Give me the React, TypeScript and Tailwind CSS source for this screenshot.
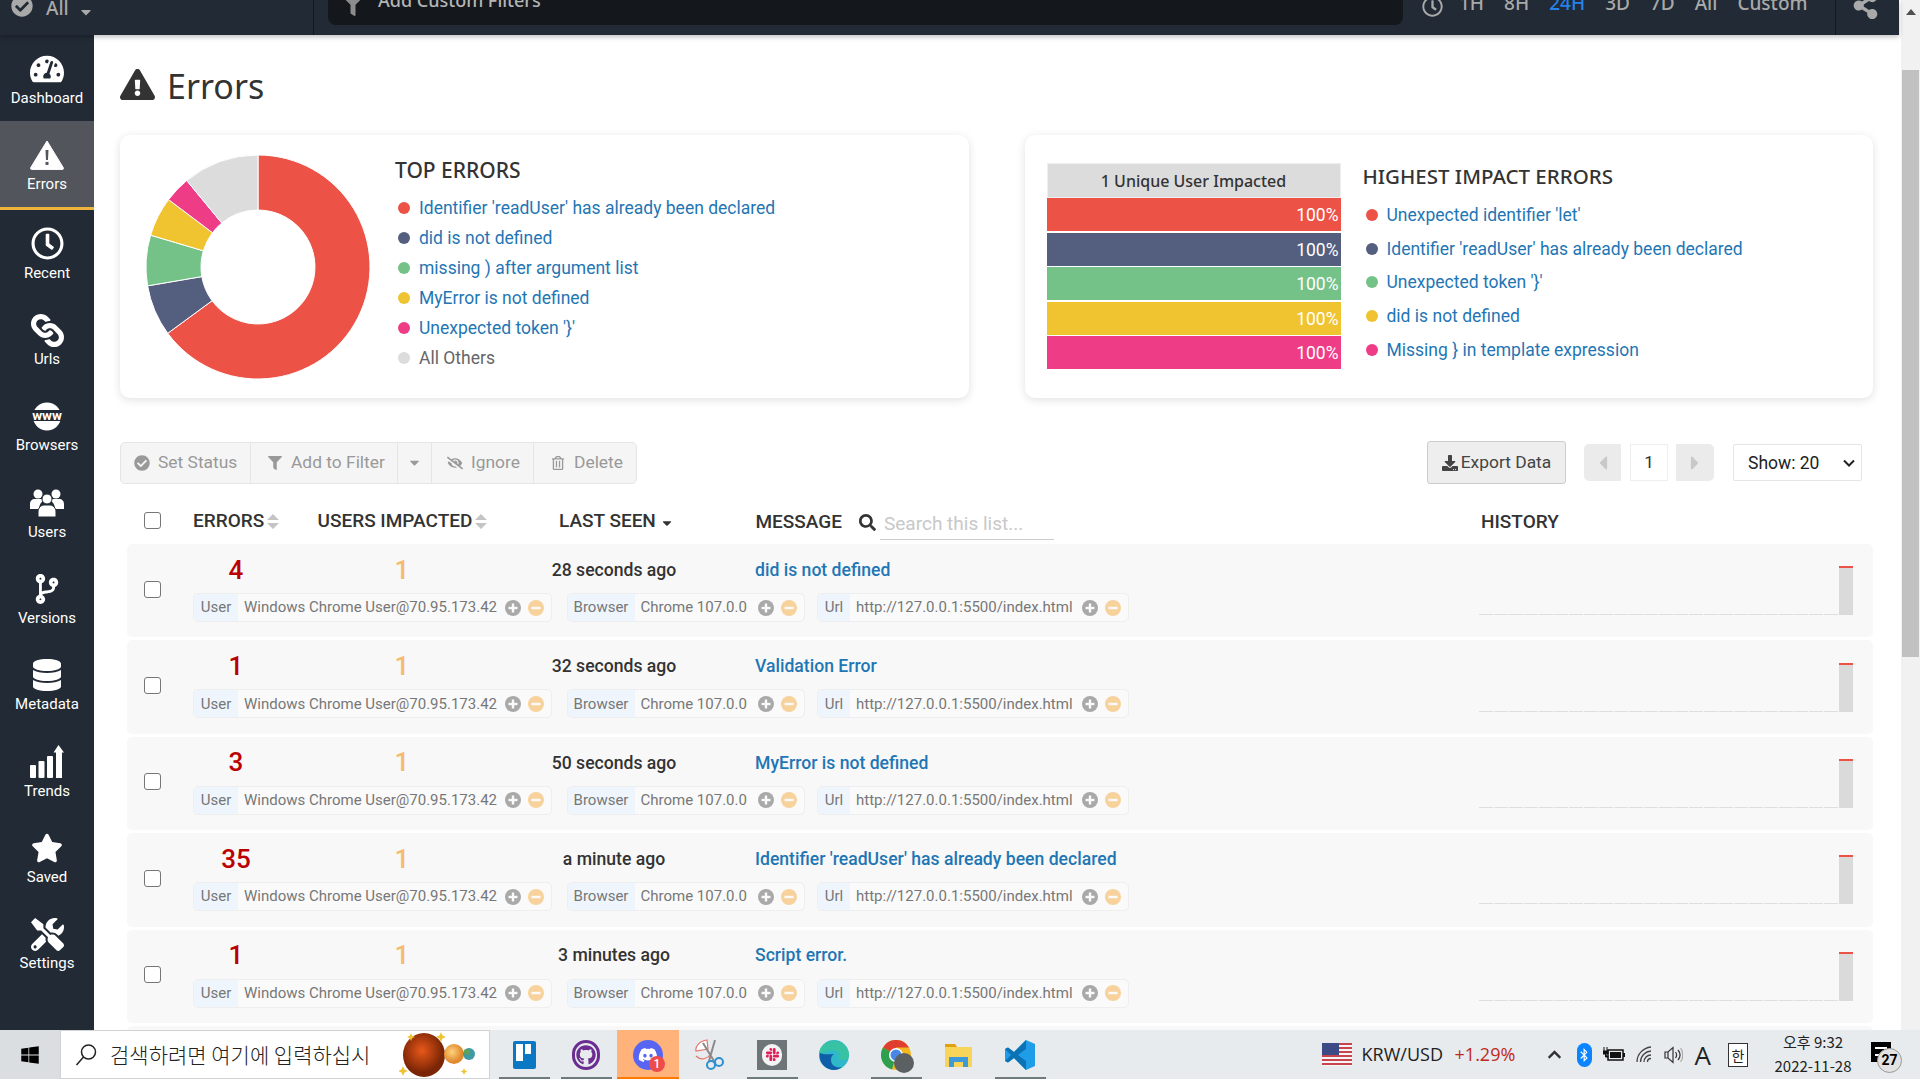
import type { ReactNode } from 'react';
import { FaCheckCircle, FaCodeBranch, FaDatabase, FaDownload, FaEyeSlash, FaFilter, FaGithub, FaLink, FaRegClock, FaSearch, FaShareAlt, FaSlack, FaStar, FaTachometerAlt, FaTools, FaDiscord, FaExclamationTriangle, FaRegTrashAlt, FaCaretDown, FaCaretLeft, FaCaretRight, FaBluetoothB, FaWindows, FaChevronUp } from 'react-icons/fa';

const red = '#ec5246';
const slate = '#545e7f';
const green = '#74c287';
const yellow = '#f0c330';
const pink = '#ee3d86';
const gray = '#dcdcdc';

const slices = [
  { from: 0, to: 233.7, color: red },
  { from: 233.7, to: 260.3, color: slate },
  { from: 260.3, to: 286.5, color: green },
  { from: 286.5, to: 307, color: yellow },
  { from: 307, to: 320.5, color: pink },
  { from: 320.5, to: 360, color: gray },
];

const topErrors = [
  { label: "Identifier 'readUser' has already been declared", color: red },
  { label: 'did is not defined', color: slate },
  { label: 'missing ) after argument list', color: green },
  { label: 'MyError is not defined', color: yellow },
  { label: "Unexpected token '}'", color: pink },
];

const impactErrors = [
  { label: "Unexpected identifier 'let'", color: red },
  { label: "Identifier 'readUser' has already been declared", color: slate },
  { label: "Unexpected token '}'", color: green },
  { label: 'did is not defined', color: yellow },
  { label: 'Missing } in template expression', color: pink },
];

const rows = [
  { count: '4', seen: '28 seconds ago', message: 'did is not defined' },
  { count: '1', seen: '32 seconds ago', message: 'Validation Error' },
  { count: '3', seen: '50 seconds ago', message: 'MyError is not defined' },
  { count: '35', seen: 'a minute ago', message: "Identifier 'readUser' has already been declared" },
  { count: '1', seen: '3 minutes ago', message: 'Script error.' },
];

function polar(r: number, deg: number) {
  const a = (deg * Math.PI) / 180;
  return `${112 + r * Math.sin(a)} ${112 - r * Math.cos(a)}`;
}

function Donut() {
  return (
    <svg width="224" height="224" viewBox="0 0 224 224" className="shrink-0">
      {slices.map((s) => {
        const big = s.to - s.from > 180 ? 1 : 0;
        return (
          <path
            key={s.color}
            fill={s.color}
            stroke="#fff"
            strokeWidth="1"
            d={`M${polar(112, s.from)} A112 112 0 ${big} 1 ${polar(112, s.to)} L${polar(57, s.to)} A57 57 0 ${big} 0 ${polar(57, s.from)} Z`}
          />
        );
      })}
    </svg>
  );
}

function Globe() {
  return (
    <svg width="34" height="29" viewBox="0 0 34 29">
      <circle cx="17" cy="14.5" r="14" fill="#fff" />
      <rect x="0" y="8" width="34" height="11" fill="#222a35" />
      <text x="17" y="18" textAnchor="middle" fill="#fff" fontSize="13.5" fontWeight="700" fontFamily="Roboto, sans-serif">www</text>
    </svg>
  );
}

function TrendsIcon() {
  return (
    <svg width="34" height="34" viewBox="0 0 34 34" fill="#fff">
      <rect x="0" y="20" width="6" height="13" rx="1" />
      <rect x="8.500" y="16" width="6" height="17" rx="1" />
      <rect x="17" y="11" width="6" height="22" rx="1" />
      <path d="M26 33V7.500h-2.500L28.500 0l5.500 7.500H32V33z" />
    </svg>
  );
}

function UsersIcon() {
  return (
    <svg width="34" height="28" viewBox="0 0 34 28" fill="#fff">
      <circle cx="8" cy="5" r="4.500" />
      <circle cx="26" cy="5" r="4.500" />
      <path d="M0 20v-5c0-3 2-5 5-5h6c1 0 2 .5 3 1-3 2-5 5-5 9z" />
      <path d="M34 20v-5c0-3-2-5-5-5h-6c-1 0-2 .5-3 1 3 2 5 5 5 9z" />
      <circle cx="17" cy="10" r="5" fill="#fff" stroke="#222a35" strokeWidth="1" />
      <path d="M8 28v-5c0-4 3-7 6-7h6c3 0 6 3 6 7v5z" stroke="#222a35" strokeWidth="1" />
    </svg>
  );
}

function WarnIcon({ size, color }: { size: number; color: string }) {
  return (
    <svg width={size} height={size * 0.88} viewBox="0 0 34 30">
      <path d="M17 1 33.5 28a1 1 0 0 1-1 1.5H1.500a1 1 0 0 1-1-1.500z" fill={color} stroke={color} strokeWidth="1" strokeLinejoin="round" />
      <path d="M15.500 10h3l-.5 10h-2z" fill={color === '#fff' ? '#52555c' : '#fff'} />
      <rect x="15.500" y="22" width="3" height="3" fill={color === '#fff' ? '#52555c' : '#fff'} />
    </svg>
  );
}

const navItems: { label: string; icon: ReactNode; active?: boolean }[] = [
  { label: 'Dashboard', icon: <FaTachometerAlt size={34} /> },
  { label: 'Errors', icon: <WarnIcon size={34} color="#fff" />, active: true },
  { label: 'Recent', icon: <FaRegClock size={33} /> },
  { label: 'Urls', icon: <FaLink size={33} className="rotate-90" /> },
  { label: 'Browsers', icon: <Globe /> },
  { label: 'Users', icon: <UsersIcon /> },
  { label: 'Versions', icon: <FaCodeBranch size={30} /> },
  { label: 'Metadata', icon: <FaDatabase size={32} /> },
  { label: 'Trends', icon: <TrendsIcon /> },
  { label: 'Saved', icon: <FaStar size={32} /> },
  { label: 'Settings', icon: <FaTools size={33} /> },
];

function Sidebar() {
  return (
    <aside className="w-[94px] shrink-0 bg-[#222a35] text-white flex flex-col">
      {navItems.map((item) => (
        <div
          key={item.label}
          className={
            item.active
              ? 'h-[88.500px] shrink-0 flex flex-col items-center bg-[#52555c] border-b-[3px] border-[#f0b43c] pt-[16px]'
              : 'h-[86.300px] shrink-0 flex flex-col items-center pt-[16px]'
          }
        >
          <div className="h-[36px] flex items-center justify-center">{item.icon}</div>
          <span className="text-[15px] leading-[18px] mt-[2px]">{item.label}</span>
        </div>
      ))}
    </aside>
  );
}

function TopBar() {
  const times = ['1H', '8H', '24H', '3D', '7D', 'All', 'Custom'];
  return (
    <header className="h-[35px] shrink-0 bg-[#222a35] flex text-[#a9a9a9] overflow-hidden relative z-10 shadow-[0_2px_5px_rgba(0,0,0,0.25)] font-['Noto_Sans',sans-serif] font-medium text-[19px] leading-[24px]">
      <div className="w-[314px] shrink-0 border-r border-[#14181c] flex items-start pl-[11px] -mt-[8px]">
        <FaCheckCircle size={22} className="mt-[3px]" />
        <span className="ml-[13px] mt-[4px]">All</span>
        <FaCaretDown size={16} className="ml-[9px] mt-[12px]" />
      </div>
      <div className="ml-[14px] w-[1075px] h-[25px] bg-[#14181c] rounded-b-[8px] flex items-start pl-[15px]">
        <FaFilter size={20} className="-mt-[4px] text-[#8c8c8c]" />
        <span className="ml-[15px] -mt-[12px] text-[#b5b5b5] text-[18px]">Add Custom Filters</span>
      </div>
      <div className="flex items-start ml-[19px] -mt-[9px]">
        <FaRegClock size={21} className="mt-[5px] mr-[16px]" />
        <div className="flex gap-[20px]">
          {times.map((t) => (
            <span key={t} className={t === '24H' ? 'text-[#2383e8]' : ''}>{t}</span>
          ))}
        </div>
      </div>
      <div className="ml-auto w-[64px] border-l border-[#14181c] pl-[16px]">
        <FaShareAlt size={27} className="-mt-[8px]" />
      </div>
    </header>
  );
}

function SortIcon({ className }: { className?: string }) {
  return (
    <svg width="12" height="15" viewBox="0 0 12 15" fill="#c4c4c4" className={className}>
      <path d="M6 0l6 6H0zM6 15l6-6H0z" />
    </svg>
  );
}

function RoundAction({ kind }: { kind: 'plus' | 'minus' }) {
  return (
    <svg width="16" height="16" viewBox="0 0 16 16">
      <circle cx="8" cy="8" r="8" fill={kind === 'plus' ? '#a9a9a9' : '#f8d29c'} />
      <rect x="3.500" y="6.800" width="9" height="2.400" fill="#fafafa" />
      {kind === 'plus' && <rect x="6.800" y="3.500" width="2.400" height="9" fill="#fafafa" />}
    </svg>
  );
}

function Chip({ label, value, width, labelWidth }: { label: string; value: string; width: string; labelWidth: string }) {
  return (
    <div className={`${width} h-[29px] flex items-center bg-[#fafafa] border border-[#eeeeee] rounded-[5px] overflow-hidden text-[15px] text-[#777]`}>
      <span className={`${labelWidth} h-full shrink-0 bg-[#eef5fc] flex items-center justify-center`}>{label}</span>
      <span className="ml-[6px] whitespace-nowrap">{value}</span>
      <div className="ml-auto mr-[7px] flex gap-[7px]">
        <RoundAction kind="plus" />
        <RoundAction kind="minus" />
      </div>
    </div>
  );
}

function History() {
  return (
    <div className="ml-auto mr-[20px] h-[49px] flex items-end shrink-0">
      {Array.from({ length: 24 }).map((_, i) => (
        <div key={i} className="w-[14px] mr-[1px] h-[1px] bg-[#dedede]" />
      ))}
      <div className="w-[14px] h-[49px] bg-[#dadada] border-t-2 border-[#ec5246]" />
    </div>
  );
}

function ErrorRow({ count, seen, message }: { count: string; seen: string; message: string }) {
  return (
    <div className="h-[93.400px] mb-[3px] ml-[6.500px] bg-[#f8f8f8] rounded-[5px] flex items-center pl-[17.500px]">
      <input type="checkbox" className="w-[17px] h-[17px] -mt-[3px] shrink-0 appearance-none border border-[#767676] rounded-[3px] bg-white" />
      <div className="ml-[32px] flex flex-col self-start">
        <div className="h-[49px] flex items-center pt-[3px]">
          <span className="w-[86px] text-center text-[26px] font-medium text-[#bb0000]">{count}</span>
          <span className="w-[244px] pl-[2px] text-center text-[26px] font-medium text-[#f5bb6e]">1</span>
          <span className="w-[182px] text-center text-[17.600px] font-medium text-[#333]">{seen}</span>
          <span className="pl-[50px] text-[17.600px] font-medium text-[#1f76b4]">{message}</span>
        </div>
        <div className="flex">
          <Chip label="User" value="Windows Chrome User@70.95.173.42" width="w-[359px]" labelWidth="w-[44px]" />
          <div className="w-[14.500px]" />
          <Chip label="Browser" value="Chrome 107.0.0" width="w-[238px]" labelWidth="w-[67px]" />
          <div className="w-[12.500px]" />
          <Chip label="Url" value="http://127.0.0.1:5500/index.html" width="w-[311.500px]" labelWidth="w-[32px]" />
        </div>
      </div>
      <History />
    </div>
  );
}

function Legend({ items, pitch }: { items: { label: string; color: string }[]; pitch: string }) {
  return (
    <ul>
      {items.map((item) => (
        <li key={item.label} className={`${pitch} flex items-center text-[17.500px] text-[#1f76b4]`}>
          <span className="w-[12px] h-[12px] rounded-full shrink-0 mr-[9px] ml-[3px]" style={{ backgroundColor: item.color }} />
          {item.label}
        </li>
      ))}
    </ul>
  );
}

function Cards() {
  const bars = [red, slate, green, yellow, pink];
  return (
    <div className="grid grid-cols-2 gap-[56px]">
      <section className="h-[263px] bg-white rounded-[10px] shadow-[0_2px_10px_rgba(0,0,0,0.12)] flex pl-[26px] pt-[20px]">
        <Donut />
        <div className="ml-[25px]">
          <h2 className="text-[21px] leading-[30px] font-medium text-[#333] font-['Noto_Sans',sans-serif]">TOP ERRORS</h2>
          <div className="mt-[8px]">
            <Legend items={topErrors} pitch="h-[30px]" />
            <div className="h-[30px] flex items-center text-[17.500px] text-[#666]">
              <span className="w-[12px] h-[12px] rounded-full mr-[9px] ml-[3px] bg-[#dcdcdc]" />
              All Others
            </div>
          </div>
        </div>
      </section>
      <section className="h-[263px] bg-white rounded-[10px] shadow-[0_2px_10px_rgba(0,0,0,0.12)] flex pl-[22px] pt-[28px]">
        <div className="w-[294px] shrink-0">
          <div className="h-[35px] bg-[#dcdcdc] border border-[#eeeeee] flex items-center justify-center text-[16px] font-medium text-[#333] font-['Noto_Sans',sans-serif]">
            1 Unique User Impacted
          </div>
          {bars.map((c) => (
            <div key={c} className="h-[33px] mb-[1.500px] flex items-center justify-end pr-[2px] pt-[2px] text-white text-[17.500px]" style={{ backgroundColor: c }}>
              100%
            </div>
          ))}
        </div>
        <div className="ml-[22px] -mt-[2px]">
          <h2 className="text-[20.500px] leading-[30px] font-medium text-[#333] font-['Noto_Sans',sans-serif]">HIGHEST IMPACT ERRORS</h2>
          <div className="mt-[7px]">
            <Legend items={impactErrors} pitch="h-[33.750px]" />
          </div>
        </div>
      </section>
    </div>
  );
}

function Toolbar() {
  const seg = 'h-full flex items-center border-r border-[#e5e5e5]';
  return (
    <div className="mt-[43px] h-[43px] flex items-center">
      <div className="w-[517px] h-[42px] bg-[#f5f5f5] border border-[#e5e5e5] rounded-[5px] flex text-[17.400px] text-[#999]">
        <div className={`${seg} w-[130px] pl-[13px] gap-[8px]`}><FaCheckCircle size={16} />Set Status</div>
        <div className={`${seg} w-[147px] pl-[17px] gap-[9px]`}><FaFilter size={14} />Add to Filter</div>
        <div className={`${seg} w-[34px] justify-center`}><FaCaretDown size={15} /></div>
        <div className={`${seg} w-[102px] pl-[15px] gap-[8px]`}><FaEyeSlash size={16} />Ignore</div>
        <div className="h-full flex items-center pl-[17px] gap-[9px]"><FaRegTrashAlt size={14} />Delete</div>
      </div>
      <div className="ml-auto flex items-center mr-[11px]">
        <div className="w-[139px] h-[43px] bg-[#eeeeee] border border-[#cccccc] rounded-[3px] flex items-center justify-center gap-[3px] text-[17.400px] text-[#444]">
          <FaDownload size={16} />Export Data
        </div>
        <div className="ml-[18px] w-[37px] h-[37px] bg-[#ebebeb] rounded-l-[5px] flex items-center justify-center text-[#c8c8c8]"><FaCaretLeft size={22} /></div>
        <div className="ml-[9px] w-[38px] h-[37px] bg-white border border-[#eeeeee] flex items-center justify-center text-[17px] text-[#333]">1</div>
        <div className="ml-[8px] w-[38px] h-[37px] bg-[#ebebeb] rounded-r-[5px] flex items-center justify-center text-[#c8c8c8]"><FaCaretRight size={22} /></div>
        <div className="ml-[19px] w-[129px] h-[37px] bg-white border border-[#e5e5e5] rounded-[2px] flex items-center pl-[14px] pt-[1px] text-[17.500px] text-[#222]">
          Show: 20
          <svg width="12" height="8" viewBox="0 0 12 8" className="ml-auto mr-[6px]" fill="none" stroke="#222" strokeWidth="2"><path d="M1 1.500l5 5 5-5" /></svg>
        </div>
      </div>
    </div>
  );
}

function ListHeader() {
  const h = 'text-[19px] font-medium text-[#333]';
  return (
    <div className="h-[60px] flex items-center relative">
      <input type="checkbox" className="ml-[24px] w-[17px] h-[17px] mt-[13px] appearance-none border border-[#767676] rounded-[3px] bg-white" />
      <div className="ml-[32px] w-[124.500px] flex items-center gap-[3px] mt-[14px]"><span className={h}>ERRORS</span><SortIcon /></div>
      <div className="w-[241.500px] flex items-center gap-[3px] mt-[14px]"><span className={h}>USERS IMPACTED</span><SortIcon /></div>
      <div className="w-[196.500px] flex items-center gap-[4px] mt-[14px]"><span className={h}>LAST SEEN</span><FaCaretDown size={14} className="text-[#333] mt-[4px]" /></div>
      <span className={`${h} mt-[17px]`}>MESSAGE</span>
      <FaSearch size={17} className="ml-[17px] mt-[17px] text-[#333]" />
      <div className="ml-[4px] w-[174px] h-[30px] border-b border-[#cccccc] pl-[4px] text-[19px] text-[#c8c8c8] flex items-center mt-[21px]">Search this list...</div>
      <span className={`${h} absolute left-[1361px] top-[24px]`}>HISTORY</span>
    </div>
  );
}

function Scrollbar() {
  return (
    <div className="w-[21px] shrink-0 bg-white flex">
      <div className="ml-[2px] w-[19px] bg-[#f1f1f1] flex flex-col items-center relative">
        <svg width="10" height="6" viewBox="0 0 10 6" className="mt-[9px]" fill="#505050"><path d="M5 0l5 6H0z" /></svg>
        <div className="mt-[55px] w-[17px] h-[587px] bg-[#c1c1c1]" />
      </div>
    </div>
  );
}

function Planets() {
  return (
    <svg width="82" height="50" viewBox="0 0 82 50" className="ml-auto mr-[8px] shrink-0">
      <defs>
        <radialGradient id="mars" cx="45%" cy="40%"><stop offset="0%" stopColor="#e8581a" /><stop offset="100%" stopColor="#7a2505" /></radialGradient>
        <radialGradient id="sun" cx="40%" cy="40%"><stop offset="0%" stopColor="#ffd27a" /><stop offset="100%" stopColor="#e08a30" /></radialGradient>
      </defs>
      <ellipse cx="25" cy="25" rx="21" ry="22" fill="url(#mars)" />
      <circle cx="55" cy="24" r="10" fill="url(#sun)" />
      <circle cx="70" cy="24" r="6" fill="#3f9aa5" />
      <circle cx="68" cy="22" r="3" fill="#5da356" />
      <path d="M12 3l1.200 2.800L16 7l-2.800 1.200L12 11l-1.200-2.800L8 7l2.800-1.200zM42 2l1.500 3.500L47 7l-3.500 1.500L42 12l-1.500-3.500L37 7l3.500-1.500zM4 36l1.500 3.500L9 41l-3.500 1.500L4 46l-1.500-3.500L-1 41l3.500-1.500zM65 38l1 2.500L68.500 41.500 66 42.500 65 45l-1-2.500-2.500-1 2.500-1z" fill="#f0c330" />
    </svg>
  );
}

function AppCell({ children, mark, hot }: { children: ReactNode; mark?: boolean; hot?: boolean }) {
  return (
    <div className={hot ? 'w-[62px] h-full flex items-center justify-center relative bg-[#ffb27a]' : 'w-[62px] h-full flex items-center justify-center relative'}>
      {children}
      {mark && <div className="absolute bottom-0 left-[6px] right-[5px] h-[2px] bg-[#6f7a80]" />}
      {hot && <div className="absolute bottom-0 left-0 right-0 h-[2px] bg-[#ff7a00]" />}
    </div>
  );
}

function Taskbar() {
  return (
    <footer className="h-[49px] shrink-0 bg-[#e7ebed] flex items-center text-[#222]">
      <div className="w-[60px] h-full bg-[#dadee1] flex items-center justify-center"><FaWindows size={20} className="text-black" /></div>
      <div className="w-[430px] h-full bg-white border border-[#cfd3d6] flex items-center pl-[14px] overflow-hidden">
        <svg width="22" height="24" viewBox="0 0 22 24" fill="none" stroke="#222" strokeWidth="1.500"><circle cx="13.500" cy="9" r="7" /><path d="M8.500 14 1.500 22" /></svg>
        <span className="ml-[13px] text-[21px] whitespace-nowrap font-['Noto_Sans_CJK_KR',sans-serif] font-light">검색하려면 여기에 입력하십시</span>
        <Planets />
      </div>
      <div className="ml-[3px] flex h-full">
        <AppCell mark>
          <div className="w-[23px] h-[28px] bg-[#0a78c2] rounded-[2px] flex gap-[2px] p-[3.500px]">
            <div className="w-[7px] h-[17px] bg-white" /><div className="w-[6px] h-[10px] bg-white" />
          </div>
        </AppCell>
        <AppCell mark>
          <div className="w-[28px] h-[30px] rounded-full border-[3px] border-[#6b2d91] flex items-center justify-center"><FaGithub size={20} className="text-[#6b2d91]" /></div>
        </AppCell>
        <AppCell hot>
          <div className="w-[30px] h-[30px] rounded-full bg-[#5865f2] flex items-center justify-center relative">
            <FaDiscord size={20} className="text-white" />
            <span className="absolute -right-[2px] -bottom-[2px] w-[16px] h-[16px] rounded-full bg-[#ee4b4b] text-white text-[12px] leading-[16px] text-center font-medium">1</span>
          </div>
        </AppCell>
        <AppCell>
          <svg width="30" height="32" viewBox="0 0 30 32" fill="none">
            <path d="M12 1 C4 2 0 8 1 12 L13 10 Z" stroke="#e8746c" strokeWidth="1.200" fill="#fff" />
            <path d="M1 17 C6 22 12 20 16 15" stroke="#e8746c" strokeWidth="1.200" />
            <path d="M8 4 19 22M20 1 14 22" stroke="#8a8a8a" strokeWidth="2" />
            <circle cx="16" cy="26" r="4" stroke="#2f8fd0" strokeWidth="2" />
            <circle cx="24" cy="23" r="4" stroke="#2f8fd0" strokeWidth="2" />
          </svg>
        </AppCell>
        <AppCell mark>
          <div className="w-[30px] h-[30px] bg-[#6d7578] flex items-center justify-center">
            <div className="w-[20px] h-[22px] rounded-full bg-[#f4f4f4] flex items-center justify-center"><FaSlack size={15} className="text-[#e01e5a]" /></div>
          </div>
        </AppCell>
        <AppCell>
          <svg width="30" height="30" viewBox="0 0 30 30">
            <circle cx="15" cy="15" r="15" fill="#2fb8c9" />
            <path d="M0 15C0 6 7 1 15 1c8 0 15 6 15 14 0 3-2 5-6 5-3 0-5-1-5-2 1-1 2-2 1-4-1-3-4-4-7-4-6 0-10 4-13 5z" fill="#39c49a" opacity=".8" />
            <path d="M1 13c-2 9 5 17 14 17 3 0 6-1 8-3-3 1-8 0-10-3-2-4-1-8 2-10-6 0-10 1-14-1z" fill="#0f5ea8" />
          </svg>
        </AppCell>
        <AppCell mark>
          <div className="relative">
            <svg width="30" height="30" viewBox="0 0 30 30">
              <circle cx="15" cy="15" r="15" fill="#f2b81e" />
              <path d="M15 15 2 7.500A15 15 0 0 1 28 7.500H15z" fill="#df3e31" />
              <path d="M15 15 2 7.500A15 15 0 0 0 11 29.500z" fill="#2e9e4f" />
              <circle cx="15" cy="15" r="7" fill="#fff" />
              <circle cx="15" cy="15" r="5.500" fill="#4a86e8" />
            </svg>
            <div className="absolute -right-[3px] -bottom-[3px] w-[20px] h-[20px] rounded-full bg-[#5b6163]" />
          </div>
        </AppCell>
        <AppCell>
          <svg width="27" height="28" viewBox="0 0 27 28">
            <path d="M0 3h10l2 3h15v20H0z" fill="#f8d558" />
            <path d="M0 3h10l2 3H0z" fill="#e0a010" />
            <path d="M4 26V16h19v10h-5v-5H9v5z" fill="#3f9ad8" />
          </svg>
        </AppCell>
        <AppCell mark>
          <svg width="30" height="30" viewBox="0 0 30 30">
            <path d="M21 0 30 4v22l-9 4-12-12-6 4.500L0 21V9l3-1.500L9 12z" fill="#1f9de8" />
            <path d="M21 0 9 12 3 7.500 0 9l6 6-6 6 3 1.500L9 18l12 12V21l-8-6 8-6z" fill="#0a72b5" />
          </svg>
        </AppCell>
      </div>
      <div className="ml-auto flex items-center h-full relative pr-[29px]">
        <div className="w-[30px] h-[23px] mr-[10px] bg-[repeating-linear-gradient(#c8434c_0,#c8434c_2px,#f5f5f5_2px,#f5f5f5_4px)] relative">
          <div className="absolute left-0 top-0 w-[17px] h-[12px] bg-[#3c4a86]" />
        </div>
        <span className="text-[18px] font-['Open_Sans',sans-serif] w-[93px]">KRW/USD</span>
        <span className="text-[18px] font-['Open_Sans',sans-serif] text-[#c0281c] w-[92px]">+1.29%</span>
        <FaChevronUp size={15} className="mr-[15px] text-[#333]" />
        <div className="w-[15px] h-[24px] rounded-full bg-[#0a84ff] flex items-center justify-center mr-[11px]"><FaBluetoothB size={14} className="text-white" /></div>
        <svg width="22" height="16" viewBox="0 0 22 16" className="mr-[11px]"><rect x="5" y="3" width="15" height="10" fill="none" stroke="#111" strokeWidth="1.500" /><rect x="7" y="5" width="11" height="6" fill="#111" /><rect x="20" y="6" width="2" height="4" fill="#111" /><path d="M1 0v4M4 0v4M0 4h5v3H0zM2.500 7v3h3" stroke="#111" fill="#111" strokeWidth="1" /></svg>
        <svg width="17" height="17" viewBox="0 0 17 17" fill="none" stroke="#444" strokeWidth="1.300" className="mr-[11px]">
          <path d="M1 16C1 8 7 2 15 1M4.500 16C4.500 10 9 5.500 15 5M8 16c0-4 3-7 7-7" />
          <path d="M11.500 16c0-2 1.500-3.500 3.500-3.500" />
        </svg>
        <svg width="19" height="18" viewBox="0 0 19 18" fill="none" stroke="#333" strokeWidth="1.200" className="mr-[12px]">
          <path d="M1 6h3l5-4.500v15L4 12H1zM4 6v6" />
          <path d="M11.500 6c1.500 2 1.500 4 0 6M14 4c2.500 3 2.500 7 0 10" />
          <path d="M16.500 2c3 4 3 10 0 14" stroke="#aaa" />
        </svg>
        <span className="text-[26px] leading-none font-['Open_Sans',sans-serif] mr-[17px]">A</span>
        <div className="w-[20px] h-[24px] border border-[#333] bg-white text-[14px] leading-[22px] text-center font-['Noto_Sans_CJK_KR',sans-serif] mr-[25px]">한</div>
        <div className="w-[80px] flex flex-col items-center text-[15px] leading-[24px] font-['Noto_Sans_CJK_KR',sans-serif] whitespace-nowrap -mt-[1px]">
          <span>오후 9:32</span>
          <span>2022-11-28</span>
        </div>
        <div className="ml-[18px] relative w-[20px] h-[20px] bg-black -mt-[5px]">
          <div className="absolute left-[4px] right-[4px] top-[5px] h-[9px] border-y-2 border-white" />
          <span className="absolute left-[6px] top-[6px] w-[25px] h-[25px] rounded-full bg-[#e2e2e2] border border-[#999] text-[14px] font-bold leading-[23px] text-center text-black">27</span>
        </div>
      </div>
    </footer>
  );
}

export default function App() {
  return (
    <div className="w-[1920px] h-[1079px] overflow-hidden flex flex-col bg-white font-['Roboto',sans-serif]">
      <div className="flex-1 flex min-h-0">
        <div className="flex-1 min-w-0 flex flex-col">
          <TopBar />
          <div className="flex-1 flex min-h-0">
            <Sidebar />
            <main className="flex-1 min-w-0 overflow-hidden px-[26px]">
              <div className="h-[100px] flex items-center pb-[2px]">
                <FaExclamationTriangle size={35} className="text-[#333]" />
                <h1 className="ml-[12px] mt-[5px] text-[34px] text-[#333] font-['Noto_Sans',sans-serif]">Errors</h1>
              </div>
              <Cards />
              <Toolbar />
              <ListHeader />
              {rows.map((r) => (
                <ErrorRow key={r.seen} {...r} />
              ))}
              <div className="h-[90px] ml-[6.500px] bg-[#f8f8f8] rounded-[5px]" />
            </main>
          </div>
        </div>
        <Scrollbar />
      </div>
      <Taskbar />
    </div>
  );
}
